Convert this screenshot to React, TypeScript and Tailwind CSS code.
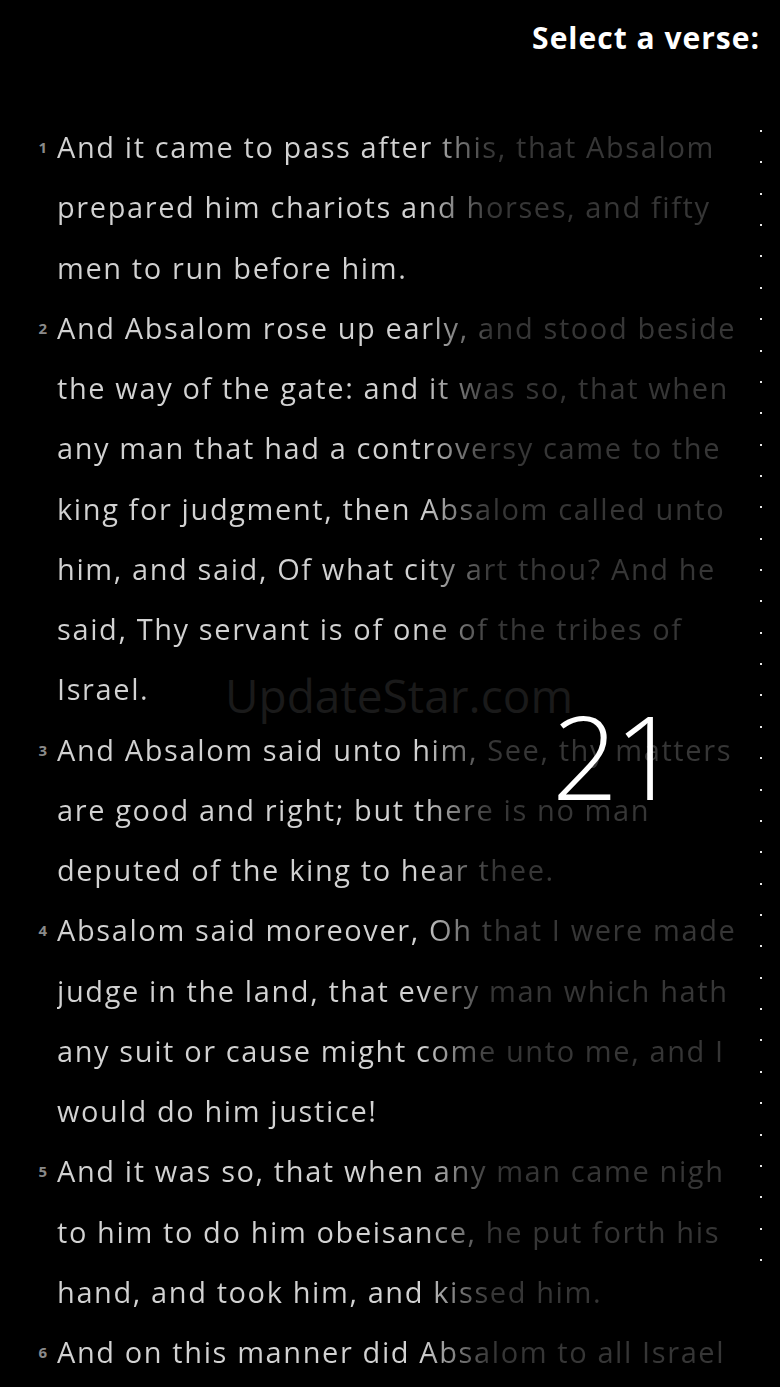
const VERSES: { n: number; lines: string[] }[] = [
  {
    n: 1,
    lines: [
      'And it came to pass after this, that Absalom',
      'prepared him chariots and horses, and fifty',
      'men to run before him.',
    ],
  },
  {
    n: 2,
    lines: [
      'And Absalom rose up early, and stood beside',
      'the way of the gate: and it was so, that when',
      'any man that had a controversy came to the',
      'king for judgment, then Absalom called unto',
      'him, and said, Of what city art thou? And he',
      'said, Thy servant is of one of the tribes of',
      'Israel.',
    ],
  },
  {
    n: 3,
    lines: [
      'And Absalom said unto him, See, thy matters',
      'are good and right; but there is no man',
      'deputed of the king to hear thee.',
    ],
  },
  {
    n: 4,
    lines: [
      'Absalom said moreover, Oh that I were made',
      'judge in the land, that every man which hath',
      'any suit or cause might come unto me, and I',
      'would do him justice!',
    ],
  },
  {
    n: 5,
    lines: [
      'And it was so, that when any man came nigh',
      'to him to do him obeisance, he put forth his',
      'hand, and took him, and kissed him.',
    ],
  },
  {
    n: 6,
    lines: ['And on this manner did Absalom to all Israel'],
  },
]

const DOTS = Array.from({ length: 37 }, (_, i) => i)

export default function App() {
  return (
    <div className="relative h-[1387px] w-full overflow-hidden bg-black font-['Open_Sans',sans-serif]">
      {/* Header */}
      <div className="flex h-[117px] justify-end pr-[20px] pt-[16px]">
        <h1 className="text-[30px] font-bold leading-[44px] tracking-[1px] text-white">Select a verse:</h1>
      </div>

      <div className="flex">
        {/* Verses */}
        <div className="flex-1">
          {VERSES.map((v) => (
            <div key={v.n} className="flex">
              <div className="w-[47px] shrink-0 text-right text-[15px] font-bold leading-[60.25px] text-[#8a8a8a]">
                {v.n}
              </div>
              <div className="ml-[10px] flex-1 bg-linear-to-r from-[#d2d2d2] from-53% to-[#363636] to-63% bg-clip-text text-[29px] leading-[60.25px] tracking-[1.6px] text-transparent">
                {v.lines.map((l, i) => (
                  <div key={i} className="whitespace-nowrap">
                    {l}
                  </div>
                ))}
              </div>
            </div>
          ))}
        </div>

        {/* Verse scrubber */}
        <div className="flex w-[35px] shrink-0 flex-col pl-[15px] pt-[13px]">
          {DOTS.map((d) => (
            <div key={d} className="flex h-[31.37px] items-start">
              <div className="h-[2px] w-[2px] bg-[#e6e6e6]" />
            </div>
          ))}
        </div>
      </div>

      {/* Watermark */}
      <div className="pointer-events-none absolute left-[225px] top-[672px] text-[46px] leading-none text-[#1a1a1a]">
        UpdateStar.com
      </div>

      {/* Current verse indicator */}
      <div className="pointer-events-none absolute left-[552px] top-[697px] text-[116px] font-light leading-none tracking-[-4px] text-white">
        21
      </div>
    </div>
  )
}
